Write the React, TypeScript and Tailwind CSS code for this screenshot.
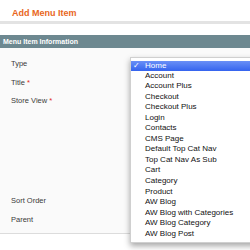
import React from 'react';

const menuItems = [
    'Account',
    'Account Plus',
    'Checkout',
    'Checkout Plus',
    'Login',
    'Contacts',
    'CMS Page',
    'Default Top Cat Nav',
    'Top Cat Nav As Sub',
    'Cart',
    'Category',
    'Product',
    'AW Blog',
    'AW Blog with Categories',
    'AW Blog Category',
    'AW Blog Post',
];

const Label: React.FC<{ text: string; required?: boolean }> = ({ text, required }) => (
    <div className="h-[18.5px] leading-[18.5px] pl-[11px] text-[7.5px] text-[#3a3a3a]">
        {text}
        {required && <span className="text-[#e0281a] ml-[2px]">*</span>}
    </div>
);

const App: React.FC = () => {
    return (
        <div className="relative w-[250px] h-[250px] overflow-hidden bg-white font-['Liberation_Sans',Arial,sans-serif]">
            <div className="h-[21px] pl-[12px] pt-[8px] text-[9px] leading-[10px] font-bold text-[#e8661c]">
                Add Menu Item
            </div>
            <div className="h-[3px] bg-[#e3e3e3]" />
            <div className="h-[11px]" />
            <div className="h-[13px] bg-[#6d8890] pl-[3px] text-[7px] leading-[13px] font-bold text-white">
                Menu Item Information
            </div>
            <div className="bg-[#fafafa] border-b border-[#dcdcdc] pt-[7px] pb-[4px]">
                <Label text="Type" />
                <Label text="Title" required />
                <Label text="Store View" required />
                <div className="h-[81.5px]" />
                <Label text="Sort Order" />
                <Label text="Parent" />
            </div>

            {/* open select list */}
            <div className="absolute left-[130px] top-[57px] w-[140px] bg-white border border-[#d0d0d0] py-[2.5px] shadow-[0_3px_6px_rgba(0,0,0,0.35)] text-[8px] text-[#111]">
                <div className="h-[10px] leading-[10px] flex items-center bg-gradient-to-b from-[#6a8ff6] to-[#3563ee] text-white">
                    <span className="w-[14px] pl-[2px] font-['DejaVu_Sans',sans-serif]">✓</span>
                    <span>Home</span>
                </div>
                {menuItems.map((item) => (
                    <div key={item} className="h-[10.55px] leading-[10.55px] pl-[14px]">
                        {item}
                    </div>
                ))}
            </div>
        </div>
    );
};

export default App;
